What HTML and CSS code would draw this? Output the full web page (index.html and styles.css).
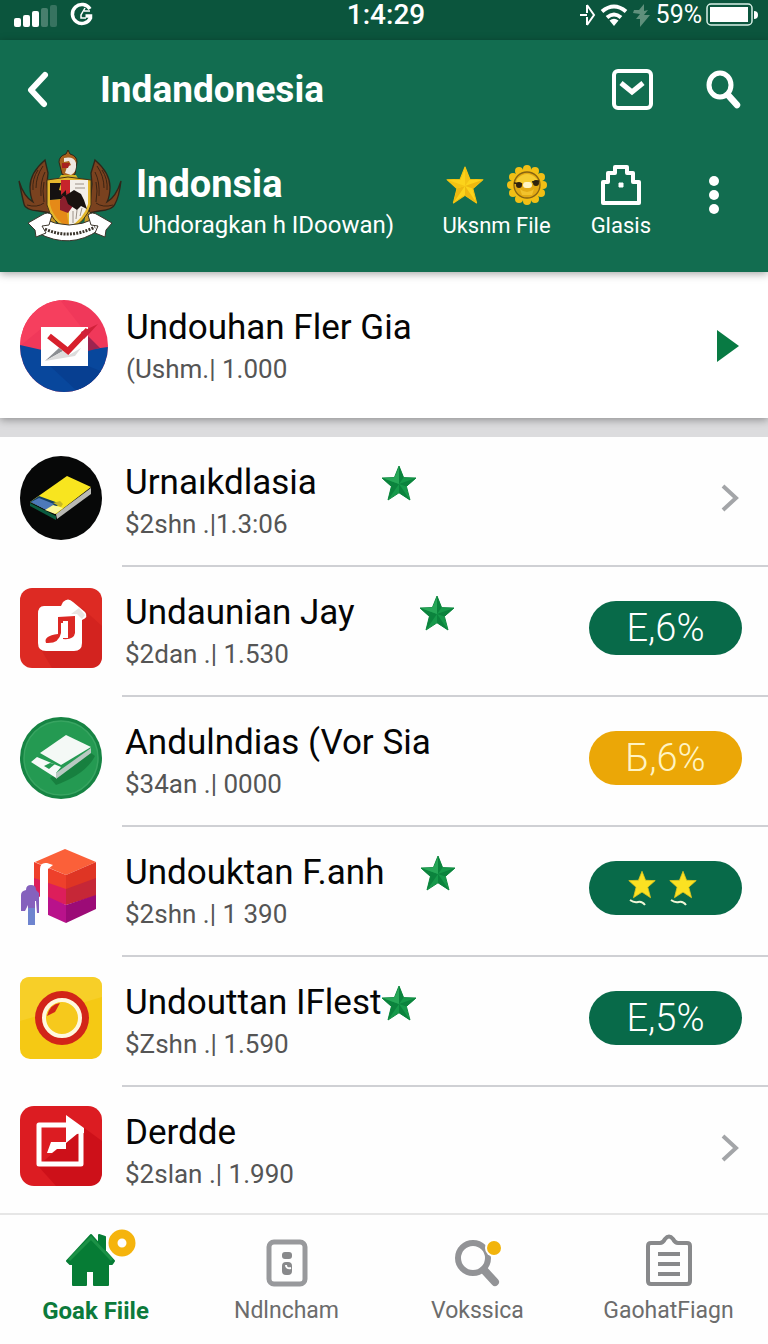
FILE: index.html
```html
<!DOCTYPE html>
<html lang="id">
<head>
  <meta charset="UTF-8" />
  <meta name="viewport" content="width=device-width, initial-scale=1" />
  <title>Indandonesia</title>
  <link rel="stylesheet" href="styles.css">
</head>
<body>
  <!-- Shared star shapes -->
  <svg class="defs" width="0" height="0" aria-hidden="true">
    <symbol id="star-green" viewBox="0 0 36 36">
      <path fill="#16994a" stroke="#128c43" stroke-linejoin="round" d="M18 1l4.600 11.600L35 13l-9.600 8.400L29 35l-11-7.200L7 35l3.400-13.600L1 13l12.400-.4z"/>
      <path fill="#0b833d" d="M18 19L18 1l4.600 11.600zM18 19L35 13l-9.600 8.400zM18 19l11 16-11-7.200zM18 19L7 35l3.400-13.600zM18 19L1 13l9.400 8.400z"/>
      <path fill="#27a758" d="M18 3v16l-4.600-6.400zM3 13.400l10.400-.8L18 19z"/>
    </symbol>
    <symbol id="star-gold" viewBox="0 0 36 36">
      <path fill="#fcd31b" stroke="#f6c40e" stroke-linejoin="round" d="M18 1l4.600 11.600L35 13l-9.600 8.400L29 35l-11-7.200L7 35l3.400-13.600L1 13l12.400-.4z"/>
      <path fill="#edb810" d="M18 19L35 13l-9.600 8.400zM18 19l11 16-11-7.200zM18 19L7 35l3.400-13.600z"/>
      <path fill="#f4c414" d="M18 19L18 1l4.600 11.600zM18 19L1 13l9.400 8.400z"/>
    </symbol>
    <symbol id="star-flat" viewBox="0 0 36 36">
      <path fill="#fbe122" stroke="#e2c51c" stroke-linejoin="round" d="M18 1l4.600 11.600L35 13l-9.600 8.400L29 35l-11-7.200L7 35l3.400-13.600L1 13l12.400-.4z"/>
    </symbol>
  </svg>

  <div class="status-bar">
    <div class="status-left">
      <svg width="66" height="26" viewBox="0 0 66 26" aria-hidden="true">
        <g fill="#fff">
          <rect x="0" y="16" width="7" height="9" rx="2"/>
          <rect x="9" y="13" width="7" height="12" rx="2"/>
          <rect x="18" y="9" width="7" height="16" rx="2"/>
          <rect x="27" y="6" width="7" height="19" rx="2" opacity=".25"/>
          <rect x="36" y="3" width="7" height="22" rx="2" opacity=".18"/>
        </g>
      </svg>
      <svg width="24" height="26" viewBox="0 0 24 26" fill="none" stroke="#fff" aria-hidden="true">
        <path stroke-width="3.500" d="M20 7A9.500 9.500 0 1 0 20.500 16v-2h-5"/>
        <path stroke-width="1.500" d="M15 6l-4 7v3h5M14 9h6"/>
      </svg>
    </div>
    <div class="status-time">1:4:29</div>
    <div class="status-right">
      <svg width="16" height="24" viewBox="0 0 16 24" fill="none" stroke="#fff" stroke-width="2" aria-hidden="true">
        <path d="M0 12h7M7 2v8M7 14v8M7 2l7 10-7 10"/>
      </svg>
      <svg width="28" height="24" viewBox="0 0 28 24" fill="none" stroke="#fff" stroke-width="4" aria-hidden="true">
        <path d="M2 8.500q12-10 24 0M7 14.500q7-6 14 0"/>
        <path fill="#fff" stroke="none" d="M9.500 17.500q4.500-3.500 9 0L14 23z"/>
      </svg>
      <svg width="20" height="26" viewBox="0 0 20 26" aria-hidden="true">
        <path fill="#5f907c" d="M12 2v7l4-1-4 5h6l-10 12v-8H4l4-5-7-1 1-3h5z"/>
      </svg>
      <span class="battery-text">59%</span>
      <svg width="52" height="24" viewBox="0 0 52 24" aria-hidden="true">
        <rect x="1" y="1" width="45" height="21" rx="4" fill="none" stroke="#d9f0e6" stroke-width="1.500"/>
        <rect x="4" y="4" width="38" height="15" fill="#fff"/>
        <path fill="#fff" d="M48 8q4 0 4 4t-4 4z"/>
      </svg>
    </div>
  </div>

  <header class="header">
    <div class="top-bar">
      <button class="icon-btn back" aria-label="Back">
        <svg width="24" height="38" viewBox="0 0 24 38" fill="none" stroke="#fff" stroke-width="6" stroke-linecap="round" stroke-linejoin="round">
          <path d="M19 4L5 19l13 14"/>
        </svg>
      </button>
      <h1>Indandonesia</h1>
      <button class="icon-btn" aria-label="Inbox">
        <svg width="42" height="42" viewBox="0 0 42 42" fill="none" stroke="#fff" stroke-width="4">
          <rect x="3" y="2" width="37" height="37" rx="4"/>
          <path stroke-width="5" d="M10 14l11 9 11-9"/>
        </svg>
      </button>
      <button class="icon-btn search" aria-label="Search">
        <svg width="36" height="40" viewBox="0 0 36 40" fill="none" stroke="#fff">
          <ellipse cx="14" cy="15" rx="11" ry="12" stroke-width="5"/>
          <path stroke-width="6.500" stroke-linecap="round" d="M22 25l9 10"/>
        </svg>
      </button>
    </div>

    <div class="identity">
      <svg class="emblem" width="104" height="92" viewBox="0 0 104 92" aria-hidden="true">
        <g fill="#7a421f" stroke="#2f2518" stroke-width="1.300">
          <path d="M27 10q-15 13-15 27 0 9 3 15-9-5-14-21 3 15 5 23 1 6 15 7l12 2-4-29 1-11z"/>
          <path d="M77 10q15 13 15 27 0 9-3 15 9-5 14-21-2 16-6 23-2 6-16 7l-10 2 3-29-1-11z"/>
        </g>
        <g fill="none" stroke="#3c2413" stroke-width="1">
          <path d="M25 16q-7 10-7 22M27 22q-5 10-4 24M20 20q-6 9-5 20M26 32q-2 8 0 20M9 55q10 3 17-2"/>
          <path d="M79 16q7 10 7 22M77 22q5 10 4 24M84 20q6 9 5 20M78 32q2 8 0 20M95 55q-10 3-17-2"/>
        </g>
        <path fill="#c99a25" d="M36 58l-10 16 12 2zM68 58l12 14-14 4z"/>
        <path fill="#a8611d" stroke="#2f2518" d="M41 12q0-6 7-8l2-4 2 4q7 2 7 8l-2 12q-6 6-13 0z"/>
        <path fill="#eee7df" d="M46 8q10-2 12 5 1 9-5 12l-6-2 2-6 4-2-2-4-5 1z"/>
        <path fill="#a82020" d="M44 13h8l-2 5h-6z"/>
        <path fill="#d2b528" d="M43 25h15l3 5H40z"/>
        <path fill="#e4b72d" stroke="#443017" d="M29 30l21-3 23 3v25q-5 17-22 25-18-8-22-25z"/>
        <path fill="#f3efe9" d="M51 30h19v24q-4 15-19 23z"/>
        <path fill="#141111" d="M32 33h11l-2 7 7 2-4 7-12 1z"/>
        <path fill="#c7242b" d="M43 30h9v19l-9-4z"/>
        <path fill="#e58a18" d="M32 50h15l4 28q-16-9-19-24z"/>
        <path fill="#8c1f2d" d="M42 50l6-7 6 3 1 10-5 7-8-3z"/>
        <path fill="#18120f" d="M47 46l9-6 7 4 3 6 3 9-6-3-4 4-9-6zM43 45l5-5v7z"/>
        <path fill="none" stroke="#9b9188" stroke-width="1" d="M57 34h9M57 38h10M55 61v12M59 60l-1 9M64 58l-2 8"/>
        <path fill="#fff" stroke="#3b352c" d="M24 68q27 14 54 0l3 12q-29 20-61 3z"/>
        <path fill="#fff" stroke="#3b352c" d="M10 73l14-8q6-4 10 0l-3 10-7 1 4 7-10 4-1-7zM94 73l-14-8q-6-4-10 0l3 10 7 1-3 7 10 4 1-7z"/>
        <path fill="none" stroke="#3b352c" stroke-width="3" stroke-dasharray="2 1.200" d="M27 79q24 11 50-2"/>
      </svg>
      <div class="identity-text">
        <h2>Indonsia</h2>
        <p>Uhdoragkan h IDoowan)</p>
      </div>
      <button class="action file-action">
        <span class="action-icons">
          <svg width="38" height="40"><use href="#star-gold"/></svg>
          <svg width="40" height="40" viewBox="0 0 40 40">
            <g fill="#f2bf15">
              <circle cx="20" cy="20" r="16"/>
              <circle cx="20" cy="4" r="4"/><circle cx="28" cy="6" r="4"/><circle cx="34" cy="12" r="4"/>
              <circle cx="36" cy="20" r="4"/><circle cx="34" cy="28" r="4"/><circle cx="28" cy="34" r="4"/>
              <circle cx="20" cy="36" r="4"/><circle cx="12" cy="34" r="4"/><circle cx="6" cy="28" r="4"/>
              <circle cx="4" cy="20" r="4"/><circle cx="6" cy="12" r="4"/><circle cx="12" cy="6" r="4"/>
            </g>
            <circle cx="20" cy="20" r="13" fill="#e3ab14" stroke="#876413" stroke-width="1.300"/>
            <path fill="#f5cc31" d="M10 14q10-10 20 0l1 4H9z"/>
            <circle cx="12" cy="20" r="3" fill="#30240f"/><circle cx="29" cy="18" r="3" fill="#30240f"/>
            <path fill="none" stroke="#2b210d" stroke-width="1.300" d="M7 18l8 1M25 17l7-1"/>
            <path fill="#f2c22c" d="M13 24q7 6 14 0l-2 6H15z"/>
            <rect x="16" y="17" width="9" height="6" rx="3" fill="#fff4c2"/>
          </svg>
        </span>
        <span>Uksnm File</span>
      </button>
      <button class="action">
        <span class="action-icons">
          <svg width="42" height="42" viewBox="0 0 42 42" fill="none" stroke="#fff" stroke-width="4" stroke-linejoin="round">
            <path d="M15 3h12v6h6v9h6v21H3V18h5V9h7z"/>
            <rect x="19" y="19" width="4" height="4" fill="#fff" stroke-width="1"/>
          </svg>
        </span>
        <span>Glasis</span>
      </button>
      <button class="icon-btn more" aria-label="More">
        <svg width="12" height="40" viewBox="0 0 12 40" fill="#fff">
          <circle cx="6" cy="5" r="5"/><circle cx="6" cy="19" r="5"/><circle cx="6" cy="33" r="5"/>
        </svg>
      </button>
    </div>
  </header>

  <main>
    <a class="featured" href="#">
      <svg class="featured-icon" width="88" height="92" viewBox="0 0 88 92" aria-hidden="true">
        <defs>
          <clipPath id="round"><ellipse cx="44" cy="46" rx="44" ry="46"/></clipPath>
        </defs>
        <g clip-path="url(#round)">
          <rect width="88" height="92" fill="#f0385a"/>
          <path fill="#f63f5e" d="M0 0h40l22 28H22L0 46z"/>
          <path fill="#08479c" d="M0 45l22 5h44l22-3v45H0z"/>
          <path fill="#073f91" d="M30 66h38l20 8v18H58z"/>
          <path fill="#9d2450" d="M68 36l12 12-12 3z"/>
        </g>
        <rect x="21" y="27" width="47" height="39" fill="#fff"/>
        <path fill="#8b8e92" d="M25 61l14-13 4 3z"/>
        <path fill="#dcdcdc" d="M25 61l18-10 6 4 12-7-6 8z"/>
        <path fill="none" stroke="#d7202c" stroke-width="6" d="M29 36l19 15 20-21"/>
        <path fill="#d0213a" d="M61 32l17-8-10 11-4 4z"/>
      </svg>
      <div class="row-text">
        <h3>Undouhan Fler Gia</h3>
        <p>(Ushm.| 1.000</p>
      </div>
      <svg width="22" height="32" viewBox="0 0 22 32" aria-hidden="true"><path fill="#087a43" d="M0 0l22 16L0 32z"/></svg>
    </a>

    <ul class="list">
      <li class="row">
        <svg class="row-icon" width="82" height="84" viewBox="0 0 82 84" aria-hidden="true">
          <ellipse cx="41" cy="42" rx="41" ry="42" fill="#070808"/>
          <path fill="#0b5c40" d="M10 47l26 13v4L10 50z"/>
          <path fill="#b9b9b4" d="M36 58l35-26v6L37 63z"/>
          <path fill="#f8e51f" d="M47 20l24 11-35 27-26-12z"/>
          <path fill="#153f61" d="M10 46l9-6 22 8-14 6z"/>
          <path fill="#4d79b9" d="M11 46l8-4 15 6-8 6z"/>
          <path fill="#fbf79b" d="M25 54l8-5 10 3-8 6z"/>
          <path fill="#c8b822" d="M33 47l7-2 3 3-2 3z"/>
        </svg>
        <div class="row-body">
          <div class="row-text">
            <h3>Urnaıkdlasia <svg class="star"><use href="#star-green"/></svg></h3>
            <p>$2shn .|1.3:06</p>
          </div>
          <svg class="chevron" viewBox="0 0 20 28"><path d="M3 2l13 12L3 26"/></svg>
        </div>
      </li>

      <li class="row">
        <svg class="row-icon" width="82" height="80" viewBox="0 0 82 80" aria-hidden="true">
          <rect width="82" height="80" rx="12" fill="#dd2a23"/>
          <path fill="#d3231f" d="M20 60l42-40 20 18v30q0 12-12 12H32z"/>
          <path fill="#fff" d="M24 18h17l2-4q5-5 10 0l12 10q4 5-3 8v23q0 8-8 8H26q-8 0-8-8V26q0-8 6-8z"/>
          <path fill="#dc2824" d="M38 29l17-1v17q-1 7-12 6V35h-2v10q-2 11-15 10-3-7 12-9z"/>
          <path fill="#fff" d="M43 33h5v17h-5z"/>
          <path fill="#e9e4e2" d="M51 26l8-6 6 7-3 4-5-5z"/>
        </svg>
        <div class="row-body">
          <div class="row-text">
            <h3>Undaunian Jay <svg class="star"><use href="#star-green"/></svg></h3>
            <p>$2dan .| 1.530</p>
          </div>
          <button class="pill">E,6%</button>
        </div>
      </li>

      <li class="row">
        <svg class="row-icon" width="82" height="84" viewBox="0 0 82 84" aria-hidden="true">
          <circle cx="41" cy="42" r="41" fill="#168443"/>
          <circle cx="41" cy="42" r="37" fill="#249a52" stroke="#38a461" stroke-width="1.500"/>
          <path fill="#17803f" d="M30 62l41-25 4 3q-9 18-39 29z"/>
          <path fill="#b9c9c2" d="M36 57l35-25v5L36 63z"/>
          <path fill="#f4f9f6" d="M46 19l25 12-30 18-21-12z"/>
          <path fill="#f6faf8" d="M17 41l24 10-5 6v5L11 46z"/>
          <path fill="#249a52" d="M24 50l6-3 5 1-6 5z"/>
        </svg>
        <div class="row-body">
          <div class="row-text">
            <h3>Andulndias (Vor Sia</h3>
            <p>$34an .| 0000</p>
          </div>
          <button class="pill pill-gold">Б,6%</button>
        </div>
      </li>

      <li class="row">
        <svg class="row-icon" width="82" height="80" viewBox="0 0 82 80" aria-hidden="true">
          <path fill="#fb6039" d="M45 1l31 13-30 13-31-13z"/>
          <path fill="#ee402b" d="M14 14l32 13v20L14 33z"/>
          <path fill="#df3524" d="M76 14L46 27v20l30-14z"/>
          <path fill="#dd1e5b" d="M14 30l32 11v16L14 47z"/>
          <path fill="#c62737" d="M76 30L46 41v16l30-9z"/>
          <path fill="#b9128b" d="M24 47l22 10v18L26 66z"/>
          <path fill="#9c0b77" d="M76 47L46 57v18l30-14z"/>
          <path fill="#fff" d="M20 21q0-7 7-6l6 2-5 4v47l-8-5z"/>
          <path fill="#8561bd" d="M6 42q0-5 5-5t5 5l3 3v20h-2l-1-12h-1v24H8V57l-3 6H1V47q0-4 5-5z"/>
          <path fill="#6e84cf" d="M8 60h7v17H8z"/>
        </svg>
        <div class="row-body">
          <div class="row-text">
            <h3>Undouktan F.anh <svg class="star star-near"><use href="#star-green"/></svg></h3>
            <p>$2shn .| 1 390</p>
          </div>
          <button class="pill" aria-label="Two stars">
            <svg width="76" height="36" viewBox="0 0 76 36">
              <use href="#star-flat" x="0" y="0" width="28" height="29"/>
              <use href="#star-flat" x="41" y="0" width="28" height="29"/>
              <path fill="none" stroke="#f1f6d8" stroke-width="2" d="M2 30q4 3 8 2t7 3M43 30q4 3 8 2t7 3"/>
            </svg>
          </button>
        </div>
      </li>

      <li class="row">
        <svg class="row-icon" width="82" height="84" viewBox="0 0 82 84" aria-hidden="true">
          <rect y="1" width="82" height="82" rx="10" fill="#f5c914"/>
          <path fill="#f7cf28" d="M10 1h62q10 0 10 10v10L0 45V11Q0 1 10 1z"/>
          <circle cx="42" cy="42" r="27" fill="#d22518"/>
          <circle cx="42" cy="42" r="18" fill="#f6c91c" stroke="#fff8de" stroke-width="4"/>
          <path fill="#d22518" d="M27 40q3-12 13-13l-5 9-8 4z"/>
        </svg>
        <div class="row-body">
          <div class="row-text">
            <h3>Undouttan IFlest <svg class="star star-tight"><use href="#star-green"/></svg></h3>
            <p>$Zshn .| 1.590</p>
          </div>
          <button class="pill">E,5%</button>
        </div>
      </li>

      <li class="row">
        <svg class="row-icon" width="82" height="80" viewBox="0 0 82 80" aria-hidden="true">
          <rect width="82" height="80" rx="14" fill="#dc1c22"/>
          <path fill="#cd1019" d="M18 60l45-39 19 14v31q0 14-14 14H36z"/>
          <path fill="none" stroke="#fff" stroke-width="5" stroke-linejoin="round" d="M47 19H19v39h42V24"/>
          <path fill="#fff" d="M46 9l18 13v5l-7 1-11 9z"/>
          <path fill="#fff" d="M31 36h15v7h-9l-5 4h-5z"/>
        </svg>
        <div class="row-body">
          <div class="row-text">
            <h3>Derdde</h3>
            <p>$2slan .| 1.990</p>
          </div>
          <svg class="chevron" viewBox="0 0 20 28"><path d="M3 2l13 12L3 26"/></svg>
        </div>
      </li>
    </ul>
  </main>

  <nav class="tab-bar">
    <a class="tab active" href="#">
      <svg width="80" height="58" viewBox="-10 0 80 58" aria-hidden="true">
        <path fill="#067c35" stroke="#067c35" stroke-width="2" stroke-linejoin="round" d="M25 6L1 32l3 3h3v21h13V42h8v14h14V35h4l2-3-9-10V8l-6-2v9z"/>
        <path fill="none" stroke="#1c9146" stroke-width="3" d="M3 31L25 9l21 22"/>
        <circle cx="56" cy="14" r="9" fill="none" stroke="#f5b40d" stroke-width="9"/>
      </svg>
      <span>Goak Fiile</span>
    </a>
    <a class="tab" href="#">
      <svg width="42" height="58" viewBox="0 0 42 58" aria-hidden="true">
        <rect x="3" y="13" width="36" height="42" rx="5" fill="none" stroke="#98999c" stroke-width="5"/>
        <rect x="16" y="23" width="10" height="7" rx="3" fill="#88898b"/>
        <rect x="16" y="33" width="10" height="13" rx="4" fill="#88898b"/>
        <path fill="none" stroke="#fff" stroke-width="2" d="M20 36q0 4 5 3"/>
      </svg>
      <span>Ndlncham</span>
    </a>
    <a class="tab" href="#">
      <svg width="50" height="58" viewBox="0 0 50 58" aria-hidden="true">
        <circle cx="20" cy="29" r="15" fill="none" stroke="#929396" stroke-width="6"/>
        <path stroke="#929396" stroke-width="8" stroke-linecap="round" d="M31 41l11 12"/>
        <circle cx="41" cy="19" r="9" fill="#fff"/>
        <circle cx="41" cy="19" r="7" fill="#f2b40c"/>
      </svg>
      <span>Vokssica</span>
    </a>
    <a class="tab" href="#">
      <svg width="46" height="58" viewBox="0 0 46 58" fill="none" stroke="#88898b" stroke-width="4" stroke-linejoin="round" aria-hidden="true">
        <path d="M5 14h9q3 0 5-4 4-5 8 0 2 4 5 4h9q3 0 3 3v35q0 3-3 3H5q-3 0-3-3V17q0-3 3-3z"/>
        <path d="M12 25h22M12 35h22M12 45h22"/>
      </svg>
      <span>GaohatFiagn</span>
    </a>
  </nav>
</body>
</html>
```
FILE: styles.css
```css
* {
  box-sizing: border-box;
}

body {
  margin: 0;
  min-height: 100vh;
  display: flex;
  flex-direction: column;
  background: #fefefe;
  color: #050505;
  font-family: Roboto, "Liberation Sans", sans-serif;
}

h1, h2, h3, p, ul {
  margin: 0;
  padding: 0;
}

button {
  border: none;
  background: none;
  padding: 0;
  color: inherit;
  font-family: inherit;
  cursor: pointer;
}

a {
  color: inherit;
  text-decoration: none;
}

svg {
  display: block;
  flex-shrink: 0;
}

.defs {
  position: absolute;
}

/* Status bar */
.status-bar {
  display: grid;
  grid-template-columns: 1fr auto 1fr;
  align-items: center;
  height: 40px;
  padding: 0 10px 12px 14px;
  background: #0b553d;
  color: #fff;
}

.status-left,
.status-right {
  display: flex;
  align-items: center;
}

.status-left svg:first-child {
  margin-right: -10px;
}

.status-right {
  justify-content: flex-end;
  gap: 4px;
}

.status-time {
  font-size: 28px;
  font-weight: 500;
  line-height: 30px;
}

.battery-text {
  font-size: 25px;
  line-height: 30px;
}

/* Header */
.header {
  position: relative;
  padding-bottom: 20px;
  background: #126d50;
  color: #fff;
  box-shadow: 0 2px 8px rgba(0, 0, 0, 0.35);
}

.top-bar {
  display: flex;
  align-items: center;
  padding: 24px 26px;
}

.top-bar h1 {
  flex: 1;
  margin-left: 50px;
  font-size: 37px;
  font-weight: 700;
  line-height: 52px;
}

.search {
  margin-left: 53px;
}

.identity {
  display: flex;
  align-items: center;
  min-height: 112px;
  padding: 0 48px 0 18px;
}

.identity-text {
  flex: 1;
  margin-left: 14px;
  padding-top: 14px;
}

.identity-text h2 {
  font-size: 38px;
  font-weight: 700;
  line-height: 44px;
}

.identity-text p {
  margin-left: 2px;
  font-size: 24px;
  line-height: 38px;
  white-space: nowrap;
}

.action {
  display: flex;
  flex-direction: column;
  align-items: center;
  padding-top: 10px;
  font-size: 22px;
  line-height: 32px;
  white-space: nowrap;
}

.action-icons {
  display: flex;
  align-items: center;
  gap: 23px;
  height: 50px;
}

.file-action {
  margin-right: 40px;
}

.more {
  margin-left: 57px;
}

/* Featured entry */
main {
  background: #dcdcde;
}

.featured {
  display: flex;
  align-items: center;
  padding: 28px 29px 26px 20px;
  background: #fff;
  box-shadow: 0 2px 8px rgba(0, 0, 0, 0.35);
}

.featured .row-text {
  margin-left: 18px;
  padding-top: 2px;
}

/* List */
.list {
  margin-top: 19px;
  list-style: none;
  background: #fefefe;
}

.row {
  display: flex;
  align-items: center;
  padding-left: 20px;
}

.row-icon {
  margin-bottom: 8px;
}

.row-body {
  display: flex;
  align-items: center;
  flex: 1;
  margin-left: 20px;
  padding: 15px 26px 22px 3px;
  border-bottom: 2px solid #cfd0d4;
}

.row:last-child .row-body {
  padding-bottom: 20px;
  border-bottom: none;
}

.row-text {
  flex: 1;
  padding-top: 9px;
}

.row-text h3 {
  display: flex;
  align-items: center;
  font-size: 35px;
  font-weight: 400;
  line-height: 44px;
  white-space: nowrap;
}

.row-text p {
  color: #555;
  font-size: 26px;
  line-height: 38px;
}

.star {
  width: 36px;
  height: 36px;
  margin-left: 64px;
}

.star-near {
  margin-left: 36px;
}

.star-tight {
  margin-left: 0;
}

.pill {
  display: flex;
  align-items: center;
  justify-content: center;
  width: 153px;
  height: 54px;
  border-radius: 27px;
  background: #086a49;
  color: #fff;
  font-size: 38px;
  font-weight: 300;
}

.pill-gold {
  background: #eba707;
  color: #fff4c4;
}

.chevron {
  width: 20px;
  height: 28px;
  margin-right: 2px;
  fill: none;
  stroke: #a3a5a8;
  stroke-width: 4;
}

/* Bottom tabs */
.tab-bar {
  display: grid;
  grid-template-columns: repeat(4, 1fr);
  flex: 1;
  padding: 14px 4px 14px 0;
  border-top: 2px solid #e6e6e6;
  background: #fefefe;
}

.tab {
  display: flex;
  flex-direction: column;
  align-items: center;
  gap: 8px;
  color: #6c6c6c;
  font-size: 23px;
  line-height: 32px;
}

.active {
  color: #0c7a3b;
  font-size: 24px;
  font-weight: 700;
}
```
